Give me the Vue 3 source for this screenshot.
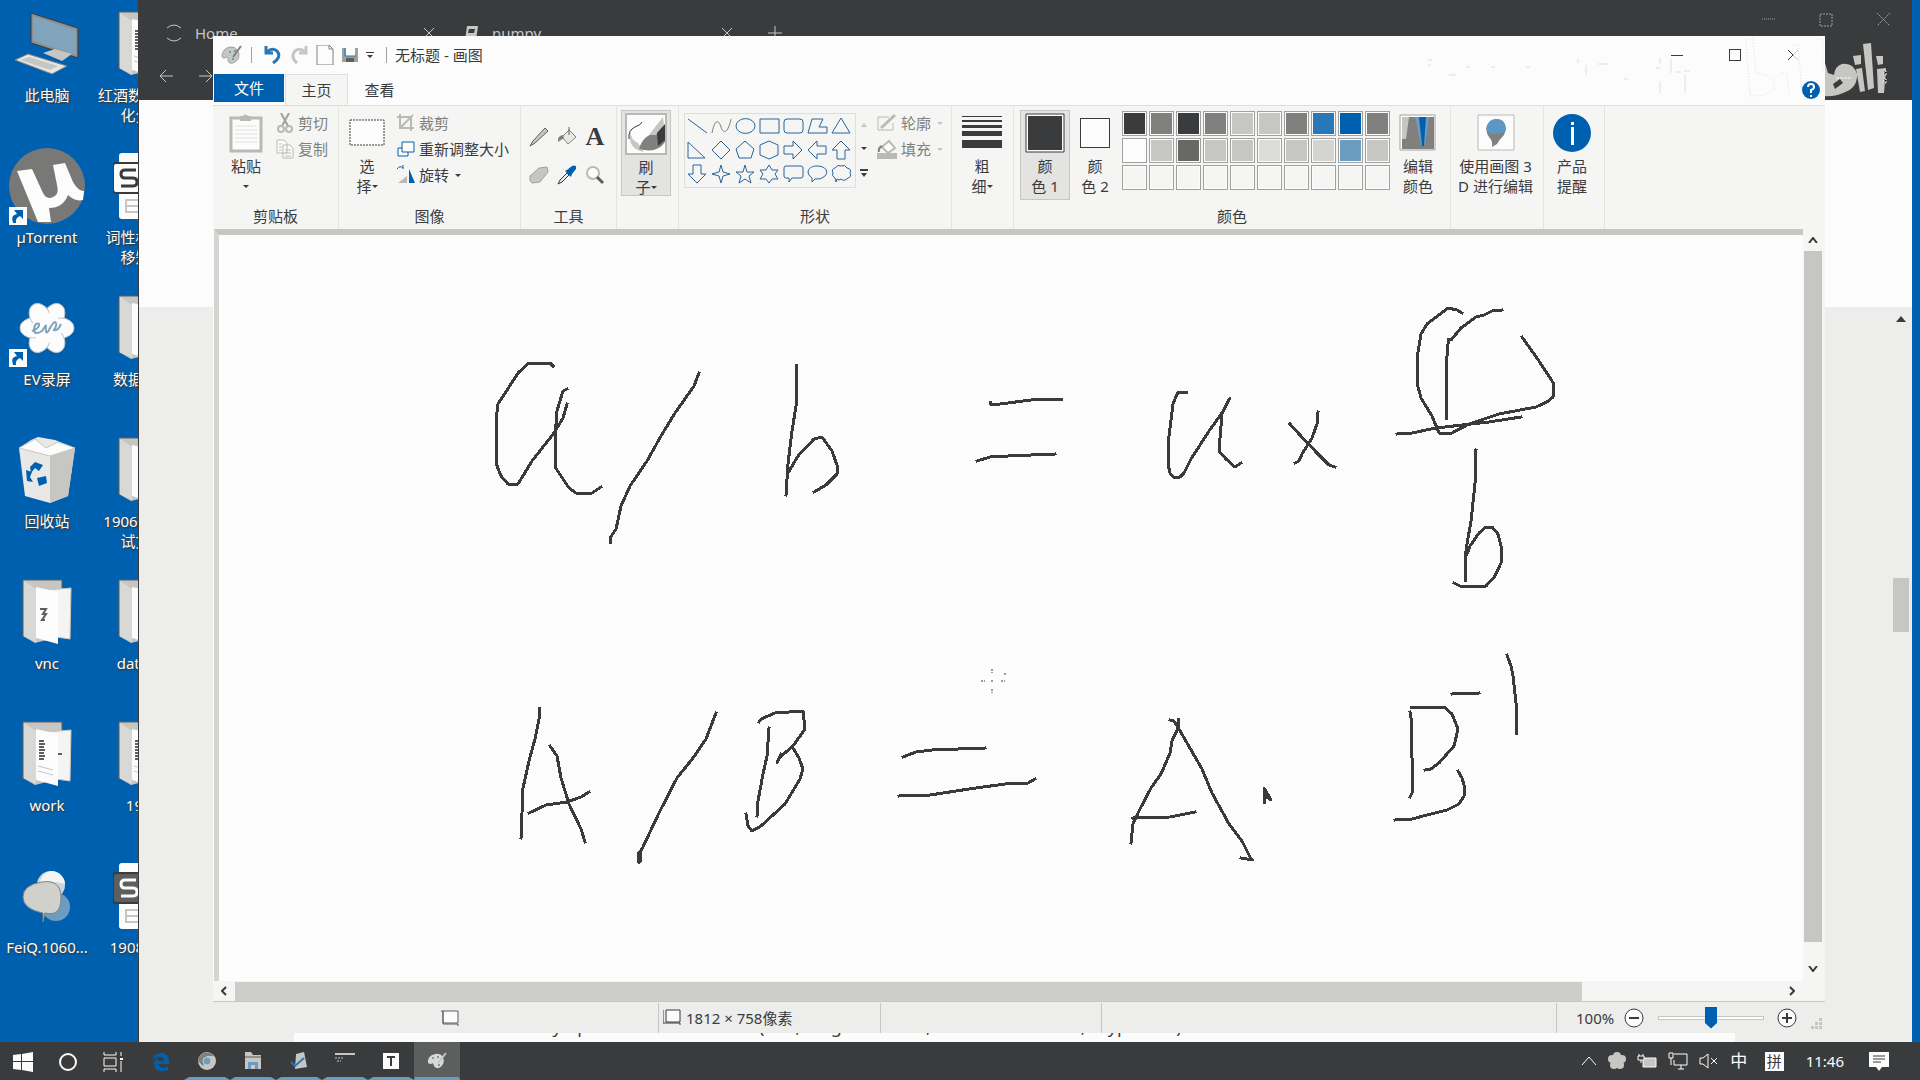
<script setup>
import { ref } from 'vue'

const zoom = ref(50)

const deskLeft = [
  { icon: 'pc', name: '此电脑' },
  { icon: 'utorrent', name: 'µTorrent', shortcut: true },
  { icon: 'ev', name: 'EV录屏', shortcut: true },
  { icon: 'bin', name: '回收站' },
  { icon: 'folder', name: 'vnc' },
  { icon: 'folder', name: 'work', lines: true },
  { icon: 'feiq', name: 'FeiQ.1060...' },
]
const deskRight = [
  { icon: 'folder', name: '红酒数据可视', second: '化分析', lines: true },
  { icon: 'sheet', name: '词性标注转', second: '移矩阵' },
  { icon: 'folder', name: '数据分析' },
  { icon: 'folder', name: '1906面试题', second: '试文件' },
  { icon: 'folder', name: 'dataset' },
  { icon: 'folder', name: '1908', lines: true },
  { icon: 'sheet', name: '190808表', dark: true },
]

const shapes = [
  { d: 'M1 3 20 17' },
  { d: 'M1 17C4 2 8 4 10 11S17 18 20 3', grey: true },
  { d: 'M1 10a9 7 0 1 0 19 0a9 7 0 1 0-19 0z' },
  { d: 'M1 3H20V17H1z' },
  { d: 'M4 3H17Q20 3 20 6V14Q20 17 17 17H4Q1 17 1 14V6Q1 3 4 3z' },
  { d: 'M5 3H16L12 11H20V17H1z' },
  { d: 'M10 2 19 17H1z' },
  { d: 'M1 2V18H18z' },
  { d: 'M10 1 19 10 10 19 1 10z' },
  { d: 'M10 1 19 9 16 18H4L1 9z' },
  { d: 'M10 1 19 5V15L10 19 1 15V5z' },
  { d: 'M1 6H10V1L19 10 10 19V14H1z' },
  { d: 'M19 6H10V1L1 10 10 19V14H19z' },
  { d: 'M6 19V10H1L10 1 19 10H14V19z' },
  { d: 'M6 1V10H1L10 19 19 10H14V1z' },
  { d: 'M10 1 12 8 19 10 12 12 10 19 8 12 1 10 8 8z' },
  { d: 'M10 1 12 8H19L14 12 16 19 10 15 4 19 6 12 1 8H8z' },
  { d: 'M10 1 13 6H19L16 10 19 15H13L10 19 7 15H1L4 10 1 6H7z' },
  { d: 'M3 2H18Q20 2 20 4V12Q20 14 18 14H9L6 18V14H3Q1 14 1 12V4Q1 2 3 2z' },
  { d: 'M5 14C-2 9 1 2 10 2S22 8 18 12Q14 16 8 15L5 18z' },
  { d: 'M4 14Q0 12 2 9Q0 5 4 4Q7 0 10 2Q14 0 16 4Q21 5 19 9Q21 13 17 14Q13 18 10 15Q8 17 6 15L5 18z' },
]

const palette = [
  '#3a3b3d', '#80817f', '#3a3b3d', '#80817f', '#c6c7c3', '#c6c7c3', '#80817f', '#2878b8', '#0060b0', '#80817f',
  '#fcfcfc', '#c6c7c3', '#686866', '#c6c7c3', '#c6c7c3', '#dcdcda', '#c6c7c3', '#d4d4d0', '#6c9cc0', '#c6c7c3',
  '', '', '', '', '', '', '', '', '', '',
]

const strokes = [
  '554,365 551,362 530,362 519,372 510,386 499,403 497,420 497,462 502,475 509,483 519,483 533,460 555,432 564,417 568,403',
  '568,388 564,390 558,410 556,437 556,466 570,487 577,492 593,492 602,486',
  '700,372 695,385 676,412 662,435 648,460 631,485 622,505 617,528 611,537 611,541',
  '797,364 797,405 793,430 789,463 787,494',
  '789,472 799,455 815,438 823,436 833,450 839,467 838,473 827,484 815,491',
  '991,401 991,403 1001,403 1040,398 1062,398',
  '978,460 991,456 1009,455 1056,453',
  '1187,391 1179,391 1174,403 1171,427 1169,443 1169,463 1171,472 1174,476 1181,476 1185,472 1192,458 1210,430 1223,412 1231,397 1223,413 1220,450 1227,458 1236,466 1242,462',
  '1291,423 1300,433 1318,452 1330,464 1336,466',
  '1319,411 1318,423 1313,437 1303,453 1300,460 1296,462',
  '1463,312 1458,309 1449,307 1440,314 1428,323 1422,333 1418,357 1418,382 1422,397 1433,415 1440,432 1453,432 1470,423 1500,413 1537,406 1548,401 1554,396 1555,383 1540,360 1523,336',
  '1503,309 1493,310 1485,314 1477,316 1462,327 1452,339 1449,338 1449,343 1447,368 1447,417',
  '1398,433 1413,432 1437,427 1490,421 1522,416',
  '1477,449 1476,483 1472,520 1468,543 1466,557 1466,579',
  '1468,553 1471,545 1480,532 1487,526 1493,526 1499,533 1502,545 1502,562 1496,575 1487,585 1461,585 1455,582',
  '540,707 540,718 536,738 530,760 524,787 522,837',
  '551,745 558,755 562,777 570,803 582,828 586,841',
  '530,812 547,804 568,801 582,796 590,791',
  '717,712 707,738 694,757 678,777 660,812 643,848 639,853 639,861 641,861 641,851',
  '760,721 762,718 776,712 804,710 806,728 794,745 780,757 778,762 782,753',
  '770,727 768,755 764,773 759,800 758,815',
  '794,747 800,757 804,768 801,778 786,803 762,825 753,830 749,825 747,813',
  '904,756 917,751 933,749 986,747',
  '900,795 931,794 970,788 1006,783 1029,782 1036,778',
  '1179,718 1179,727 1173,740 1171,752 1162,773 1152,787 1140,810 1134,823 1132,842',
  '1171,719 1175,720 1180,728 1203,768 1213,792 1230,823 1243,840 1252,858 1254,859 1242,857',
  '1134,817 1171,816 1196,811',
  '1265,801 1265,787 1272,799 1268,796',
  '1412,706 1445,706 1453,713 1459,728 1455,745 1440,762 1432,768 1426,769',
  '1411,711 1412,717 1412,753 1413,757 1413,792 1411,796',
  '1459,770 1463,777 1466,787 1465,795 1460,803 1448,809 1428,814 1413,818 1396,819',
  '1453,693 1480,692',
  '1508,654 1512,665 1514,675 1517,702 1517,732',
]
</script>

<template>
  <div class="desktop">
    <main class="workspace">
      <div class="icons">
        <div v-for="(col, c) in [deskLeft, deskRight]" :key="c" class="icon-col">
          <button v-for="item in col" :key="item.name" class="desk-item" type="button">
            <span class="desk-pic">
              <svg v-if="item.icon === 'pc'" width="66" height="64" viewBox="0 0 66 64">
                <path d="M17 1 64 16V46L17 31z" fill="#8d8e8c" stroke="#3a3b3d" />
                <path d="M19 4 62 18V43L19 29z" fill="#80a4bc" />
                <path d="M29 41 41 37 58 42 48 49z" fill="#c6c7c3" />
                <path d="M1 48 14 42 53 54 38 62z" fill="#e6e6e4" stroke="#80817f" />
                <path d="M6 48 15 45 44 54 36 58z" fill="#c6c7c3" />
              </svg>
              <svg v-else-if="item.icon === 'utorrent'" width="76" height="76" viewBox="0 0 76 76">
                <circle cx="38" cy="38" r="38" fill="#787977" />
                <path d="M8 23 23 21 34 45Q38 53 46 48Q50 45 48 37L44 17 56 15 64 34Q69 43 75 43L74 52Q66 54 59 47Q54 60 40 60L42 74 29 74z" fill="#fcfcfc" />
              </svg>
              <svg v-else-if="item.icon === 'ev'" width="58" height="52" viewBox="0 0 58 52">
                <g fill="#fcfcfc" stroke="#c6c7c3">
                  <ellipse v-for="n in 6" :key="n" cx="29" cy="12" rx="10" ry="13" :transform="`rotate(${n * 60 - 30} 29 26)`" />
                </g>
                <circle cx="29" cy="26" r="15" fill="#fcfcfc" />
                <path d="M14 29q8-3 7-7q-4-2-5 5q0 7 8 2l4-6q-1 12 3 5q4-8 6-8q3 2-1 8q4 1 7-6" fill="none" stroke="#80a4bc" stroke-width="2" />
              </svg>
              <svg v-else-if="item.icon === 'bin'" width="60" height="68" viewBox="0 0 60 68">
                <path d="M2 12 14 4 21 1 38 4 58 12 51 60 33 67 8 60z" fill="#e8e8e6" />
                <path d="M33 20 58 12 51 60 33 67z" fill="#c6c7c3" />
                <path d="M2 12 33 20 58 12 41 6 29 12 18 3z" fill="#fcfcfc" stroke="#c6c7c3" />
                <path d="M13 31l5-5 8 3-4 6-4-3-4 5zM9 34l6 2-2 5 3 5-6-1zM20 42l9-2 1 7-8 3z" fill="#0060b0" />
              </svg>
              <svg v-else-if="item.icon === 'folder'" width="50" height="66" viewBox="0 0 50 66">
                <path d="M1 1H40V57L13 64 1 57z" fill="#c6c7c3" />
                <path d="M1 1 14 10V63L1 57z" fill="#d8d8d5" />
                <path d="M26 11 49 9 48 60 34 58z" fill="#f4f4f2" stroke="#c6c7c3" />
                <path d="M14 8 36 13V65L14 59z" fill="#fcfcfc" />
                <path d="M1 58V1H40V9" fill="none" stroke="#5d5e5e" />
                <path v-if="item.lines" d="M17 20h5M17 23h6M17 26h5M17 29h6M17 32h5M17 35h6M17 38h5M36 33h4" fill="none" stroke="#5d5e5e" stroke-width="2" />
                <path v-if="item.lines" d="M16 45l15 4M16 50l15 4" fill="none" stroke="#c6c7c3" />
                <path v-else-if="c === 0" d="M18 30h6l-3 5h3l-4 6h3" fill="none" stroke="#5d5e5e" stroke-width="2" />
              </svg>
              <svg v-else-if="item.icon === 'sheet'" width="60" height="66" viewBox="0 0 60 66">
                <rect x="6" width="54" height="66" rx="3" fill="#fcfcfc" />
                <rect y="10" width="40" height="30" rx="3" :fill="item.dark ? '#5d5e5e' : '#fcfcfc'" stroke="#3a3b3d" stroke-width="2" />
                <path d="M23 17H12Q8 17 8 21T12 25H20Q24 25 24 29T20 33H8" fill="none" :stroke="item.dark ? '#fcfcfc' : '#3a3b3d'" stroke-width="3" />
                <path d="M13 47H50V59H13zM13 53H50M26 47V59" fill="none" stroke="#c6c7c3" stroke-width="2" />
              </svg>
              <svg v-else width="50" height="52" viewBox="0 0 50 52">
                <circle cx="29" cy="15" r="14" fill="#c9d6de" />
                <circle cx="34" cy="37" r="14" fill="#6c9cc0" />
                <path d="M29 1a14 14 0 0 1 14 13Q30 10 18 13Q20 2 29 1z" fill="#f4f4f2" />
                <path d="M21 52V43Q1 39 1 27T20 12T39 28T23 43z" fill="#d0d0cc" stroke="#80817f" />
              </svg>
              <svg v-if="item.shortcut" class="shortcut" width="18" height="18" viewBox="0 0 18 18">
                <path d="M0 0H18V18H0z" fill="#fcfcfc" />
                <path d="M4 16Q1 8 8 7L5 3H14V12L11 9Q6 11 7 16z" fill="#0060b0" />
              </svg>
            </span>
            <span class="desk-name">{{ item.name }}<br v-if="item.second" />{{ item.second }}</span>
          </button>
        </div>
      </div>

      <section class="browser">
        <header class="browser-bar">
          <div class="tab-strip">
            <div class="tab tab-home">
              <svg width="18" height="18" viewBox="0 0 18 18"><path d="M2 4Q9-2 16 4M2 14Q9 20 16 14" fill="none" stroke="#c6c7c3" /></svg>
              <span>Home</span>
              <button type="button" aria-label="关闭标签">
                <svg width="10" height="10" viewBox="0 0 10 10"><path d="M0 0 10 10M10 0 0 10" stroke="#c6c7c3" /></svg>
              </button>
            </div>
            <div class="tab tab-book">
              <svg width="16" height="16" viewBox="0 0 16 16"><path d="M3 1H14L12 15H1z" fill="#c6c7c3" /><path d="M5 4H11L10 8H4z" fill="#3a3b3d" /></svg>
              <span>numpy</span>
              <button type="button" aria-label="关闭标签">
                <svg width="10" height="10" viewBox="0 0 10 10"><path d="M0 0 10 10M10 0 0 10" stroke="#c6c7c3" /></svg>
              </button>
            </div>
            <button class="new-tab" type="button" aria-label="新标签">
              <svg width="14" height="14" viewBox="0 0 14 14"><path d="M7 0V14M0 7H14" stroke="#c6c7c3" /></svg>
            </button>
            <div class="browser-controls">
              <svg width="13" height="13" viewBox="0 0 13 13"><path d="M0 6H13" stroke="#a0a19f" stroke-dasharray="1 1" /></svg>
              <svg width="14" height="14" viewBox="0 0 14 14"><path d="M1 1H13V13H1z" fill="none" stroke="#a0a19f" stroke-dasharray="2 1" /></svg>
              <svg width="13" height="13" viewBox="0 0 13 13"><path d="M0 0 13 13M13 0 0 13" stroke="#a0a19f" stroke-dasharray="2 1" /></svg>
            </div>
          </div>
          <nav class="nav-row">
            <svg width="14" height="14" viewBox="0 0 14 14"><path d="M14 7H1M7 1 1 7 7 13" fill="none" stroke="#c6c7c3" /></svg>
            <svg width="14" height="14" viewBox="0 0 14 14"><path d="M0 7H13M7 1 13 7 7 13" fill="none" stroke="#c6c7c3" /></svg>
          </nav>
        </header>
        <div class="page-head"></div>
        <div class="page-body">
          <p class="code-line">Many operators can be seen (row, length divided, then the first row, dtype else)</p>
          <div class="page-scroll">
            <svg width="10" height="6" viewBox="0 0 10 6"><path d="M5 0 10 6H0z" fill="#3a3b3d" /></svg>
            <div class="page-thumb"></div>
          </div>
        </div>
      </section>

      <section class="paint">
        <header class="titlebar">
          <svg width="22" height="20" viewBox="0 0 22 20">
            <path d="M9 2Q1 4 1 11Q2 15 5 12Q8 12 7 16Q9 20 14 17Q20 13 17 6Q14 1 9 2z" fill="#c6c7c3" stroke="#a0a19f" />
            <path d="M12 12 20 1" stroke="#80817f" stroke-width="2" />
            <path d="M8 7h2M13 6h2M11 14h2" stroke="#6c9cc0" stroke-width="2" />
          </svg>
          <i class="bar"></i>
          <button type="button" aria-label="撤消"><svg width="18" height="20" viewBox="0 0 18 20"><path d="M2 1V8H9M3 7Q8 2 13 6Q18 12 9 18" fill="none" stroke="#2878b8" stroke-width="3" /></svg></button>
          <button type="button" aria-label="重做"><svg width="18" height="20" viewBox="0 0 18 20"><path d="M16 1V8H9M15 7Q10 2 5 6Q0 12 7 18" fill="none" stroke="#c6c7c3" stroke-width="3" /></svg></button>
          <button type="button" aria-label="新建"><svg width="18" height="20" viewBox="0 0 18 20"><path d="M1 0H13L17 4V20H1z" fill="#fcfcfc" stroke="#80817f" /><path d="M13 0V4H17" fill="none" stroke="#80817f" /></svg></button>
          <button type="button" aria-label="保存"><svg width="16" height="16" viewBox="0 0 16 16"><path d="M0 1H16V15H0z" fill="#a0a19f" /><path d="M4 1H13V9H4z" fill="#fcfcfc" /><path d="M4 11H12V15H4z" fill="#5d5e5e" /><path d="M3 1V9H14" fill="none" stroke="#2878b8" /></svg></button>
          <button type="button" aria-label="自定义"><svg width="8" height="6" viewBox="0 0 8 6"><path d="M0 0H8V1H0zM1 3H7L4 6z" fill="#3a3b3d" /></svg></button>
          <i class="bar last"></i>
          <h1>无标题 - 画图</h1>
          <div class="win-controls">
            <button type="button" aria-label="最小化"><svg width="12" height="12" viewBox="0 0 12 12"><path d="M0 6H12V7H0z" fill="#3a3b3d" /></svg></button>
            <button type="button" aria-label="最大化"><svg width="12" height="12" viewBox="0 0 12 12"><path d="M0 0H12V12H0zM1 1V11H11V1z" fill="#3a3b3d" fill-rule="evenodd" /></svg></button>
            <button type="button" aria-label="关闭"><svg width="12" height="12" viewBox="0 0 12 12"><path d="M1 1 6 6 1 11" fill="none" stroke="#3a3b3d" /><path d="M11 1 6 6 11 11" fill="none" stroke="#c6c7c3" /></svg></button>
          </div>
        </header>

        <nav class="tabs">
          <button class="file" type="button">文件</button>
          <button class="active" type="button">主页</button>
          <button type="button">查看</button>
          <button class="help" type="button" aria-label="帮助">
            <svg width="18" height="18" viewBox="0 0 18 18"><circle cx="9" cy="9" r="9" fill="#0060b0" /><path d="M6 6Q6 3 9 3T12 6Q12 8 9 9V12M9 14V16" fill="none" stroke="#fcfcfc" stroke-width="2" /></svg>
          </button>
        </nav>

        <div class="ribbon">
          <section class="group g-clip">
            <div class="body">
              <button class="big" type="button">
                <svg width="34" height="40" viewBox="0 0 34 40">
                  <path d="M2 5H32V38H2z" fill="#fcfcfc" stroke="#b9bab6" stroke-width="3" />
                  <path d="M11 3H14Q16 0 19 3H22V8H11z" fill="#b9bab6" />
                  <path d="M6 13H28M6 17H28M6 21H28M6 25H28M6 29H28" stroke="#dededb" />
                </svg>
                <span>粘贴</span><span><i class="caret"></i></span>
              </button>
              <div class="stack">
                <button class="row off" type="button"><svg width="18" height="20" viewBox="0 0 18 20"><path d="M5 0 12 13M13 0 6 13" stroke="#a0a19f" stroke-width="2" /><circle cx="5" cy="16" r="3" fill="none" stroke="#b9bab6" stroke-width="2" /><circle cx="13" cy="16" r="3" fill="none" stroke="#b9bab6" stroke-width="2" /></svg>剪切</button>
                <button class="row off" type="button"><svg width="18" height="20" viewBox="0 0 18 20"><path d="M1 1H8L11 4V14H1zM7 6H14L17 9V19H7z" fill="#fcfcfc" stroke="#b9bab6" /><path d="M3 5H6M3 8H6M3 11H6M9 11H15M9 14H15M9 17H15" stroke="#b9bab6" /></svg>复制</button>
              </div>
            </div>
            <h2>剪贴板</h2>
          </section>

          <section class="group g-image">
            <div class="body">
              <button class="big" type="button">
                <svg width="36" height="40" viewBox="0 0 36 40"><path d="M1 7H35V32H1z" fill="#fcfcfc" stroke="#3a3b3d" stroke-dasharray="2 1" /></svg>
                <span>选</span><span>择<i class="caret"></i></span>
              </button>
              <div class="stack">
                <button class="row off" type="button"><svg width="18" height="20" viewBox="0 0 18 20"><path d="M0 4H14V18M3 1V15H17M3 15 16 2" fill="none" stroke="#b9bab6" stroke-width="2" /></svg>裁剪</button>
                <button class="row" type="button"><svg width="18" height="20" viewBox="0 0 18 20"><path d="M1 9H11V17H1z" fill="#fcfcfc" stroke="#0060b0" /><path d="M5 3H17V13H5z" fill="#fcfcfc" stroke="#0060b0" /></svg>重新调整大小</button>
                <button class="row" type="button"><svg width="18" height="20" viewBox="0 0 18 20"><path d="M12 4V18H18z" fill="#0060b0" /><path d="M10 11V18H1z" fill="#b9bab6" /><path d="M0 4Q3 0 6 3M6 0V4" fill="none" stroke="#0060b0" /></svg>旋转<i class="caret"></i></button>
              </div>
            </div>
            <h2>图像</h2>
          </section>

          <section class="group g-tools">
            <div class="body tools">
              <button type="button" aria-label="铅笔"><svg width="20" height="20" viewBox="0 0 20 20"><path d="M1 19 4 14 16 1 19 4 6 16z" fill="#c6c7c3" stroke="#5d5e5e" /></svg></button>
              <button type="button" aria-label="填充"><svg width="20" height="20" viewBox="0 0 20 20"><path d="M5 10 12 3 19 10 11 17z" fill="#e8e8e6" stroke="#80817f" /><path d="M12 0V8" stroke="#5d5e5e" /><path d="M6 8Q0 9 1 15L7 11z" fill="#80817f" /></svg></button>
              <button class="letter" type="button">A</button>
              <button type="button" aria-label="橡皮擦"><svg width="20" height="20" viewBox="0 0 20 20"><path d="M1 11 10 3 18 2 19 7 11 17 3 18 1 16z" fill="#c6c7c3" stroke="#a0a19f" /></svg></button>
              <button type="button" aria-label="取色"><svg width="20" height="20" viewBox="0 0 20 20"><path d="M1 19 3 15 10 8 12 10 5 17z" fill="#e8e8e6" stroke="#3a3b3d" /><path d="M8 6 10 5 15 1Q20-1 19 4L15 9 14 12z" fill="#0060b0" /></svg></button>
              <button type="button" aria-label="放大镜"><svg width="20" height="20" viewBox="0 0 20 20"><circle cx="8" cy="8" r="6" fill="#fcfcfc" stroke="#b9bab6" stroke-width="2" /><path d="M12 12 18 18" stroke="#5d5e5e" stroke-width="3" /></svg></button>
            </div>
            <h2>工具</h2>
          </section>

          <section class="group g-brush">
            <div class="body">
              <button class="big on" type="button">
                <svg width="42" height="42" viewBox="0 0 42 42">
                  <path d="M1 1H41V41H1z" fill="#fcfcfc" stroke="#b9bab6" stroke-width="2" />
                  <path d="M5 18Q2 36 19 39L13 30Q6 27 5 18" fill="#c6c7c3" />
                  <path d="M17 9Q16 12 10 14Q3 17 4 26" fill="none" stroke="#3a3b3d" />
                  <path d="M14 36Q18 22 31 20L40 12V29Q32 41 14 36z" fill="#80817f" />
                  <path d="M24 22 38 4 39 12 31 22z" fill="#c6c7c3" />
                  <path d="M32 20 40 11V27L33 33z" fill="#3a3b3d" />
                </svg>
                <span>刷</span><span>子<i class="caret"></i></span>
              </button>
            </div>
          </section>

          <section class="group g-shapes">
            <div class="body">
              <div class="gallery">
                <button v-for="(s, i) in shapes" :key="i" type="button" aria-label="形状">
                  <svg width="21" height="20" viewBox="0 0 21 20"><path :d="s.d" fill="none" :stroke="s.grey ? '#80817f' : '#2a639a'" /></svg>
                </button>
              </div>
              <div class="gallery-scroll">
                <svg width="8" height="8" viewBox="0 0 8 8"><path d="M4 2 7 6H1z" fill="#c6c7c3" /></svg>
                <svg width="8" height="8" viewBox="0 0 8 8"><path d="M1 2H7L4 5z" fill="#3a3b3d" /></svg>
                <svg width="8" height="8" viewBox="0 0 8 8"><path d="M0 0H8V2H0zM1 4H7L4 8z" fill="#3a3b3d" /></svg>
              </div>
              <div class="stack">
                <button class="row off" type="button"><svg width="20" height="20" viewBox="0 0 20 20"><path d="M12 4H1V17H16V10" fill="none" stroke="#b9bab6" /><path d="M4 15 18 2" stroke="#b9bab6" stroke-width="3" /></svg>轮廓<i class="caret"></i></button>
                <button class="row off" type="button"><svg width="20" height="20" viewBox="0 0 20 20"><path d="M0 14H20V20H0z" fill="#b9bab6" /><path d="M5 8 12 2 18 9 11 14z" fill="#fcfcfc" stroke="#b9bab6" stroke-width="2" /><path d="M5 7Q1 9 2 13" fill="none" stroke="#80817f" stroke-width="2" /></svg>填充<i class="caret"></i></button>
              </div>
            </div>
            <h2>形状</h2>
          </section>

          <section class="group g-size">
            <div class="body">
              <button class="big" type="button">
                <svg width="40" height="40" viewBox="0 0 40 40"><path d="M0 3H40V4H0zM0 7H40V9H0zM0 12H40V15H0zM0 18H40V23H0zM0 27H40V35H0z" fill="#3a3b3d" /></svg>
                <span>粗</span><span>细<i class="caret"></i></span>
              </button>
            </div>
          </section>

          <section class="group g-colors">
            <div class="body">
              <button class="big on tall" type="button">
                <svg width="40" height="40" viewBox="0 0 40 40"><path d="M1 1H39V39H1z" fill="#fcfcfc" stroke="#3a3b3d" /><path d="M3 3H37V37H3z" fill="#3a3b3d" /></svg>
                <span>颜</span><span>色 1</span>
              </button>
              <button class="big second" type="button">
                <svg width="30" height="40" viewBox="0 0 30 40"><path d="M0 5H30V35H0z" fill="#3a3b3d" /><path d="M1 6H29V34H1z" fill="#fcfcfc" /></svg>
                <span>颜</span><span>色 2</span>
              </button>
              <div class="palette">
                <button v-for="(p, i) in palette" :key="i" type="button" aria-label="颜色" :style="{ backgroundColor: p || '#f5f5f4' }"></button>
              </div>
              <button class="big edit" type="button">
                <svg width="38" height="40" viewBox="0 0 38 40">
                  <path d="M1 2H36V37H1z" fill="#fcfcfc" stroke="#a0a19f" />
                  <path d="M3 4H35V36H3z" fill="#80817f" /><path d="M3 4H10L7 26H3z" fill="#c6c7c3" />
                  <path d="M16 4H30L26 32H22z" fill="#6c9cc0" /><path d="M20 4H27L25 33H23z" fill="#0060b0" />
                </svg>
                <span>编辑</span><span>颜色</span>
              </button>
            </div>
            <h2>颜色</h2>
          </section>

          <section class="group g-3d">
            <div class="body">
              <button class="big" type="button">
                <svg width="38" height="40" viewBox="0 0 38 40">
                  <path d="M1 2H37V37H1z" fill="#fcfcfc" stroke="#b9bab6" />
                  <path d="M15 34Q16 28 12 24Q7 17 12 10Q19 3 26 8Q31 14 27 22Q22 27 20 31z" fill="#80817f" />
                  <path d="M9 16Q11 5 20 6Q29 8 29 17Q25 22 20 20Q14 24 9 16z" fill="#5c98c6" />
                </svg>
                <span>使用画图 3</span><span>D 进行编辑</span>
              </button>
            </div>
          </section>

          <section class="group g-alert">
            <div class="body">
              <button class="big" type="button">
                <svg width="38" height="40" viewBox="0 0 38 40"><circle cx="19" cy="20" r="19" fill="#0060b0" /><path d="M18 9H21V12H18zM18 14H21V32H18z" fill="#fcfcfc" /></svg>
                <span>产品</span><span>提醒</span>
              </button>
            </div>
          </section>
        </div>

        <div class="stage">
          <div class="stage-view">
            <svg class="drawing" width="1584" height="746" viewBox="220 234 1584 746">
              <polyline v-for="(s, i) in strokes" :key="i" :points="s" />
              <path class="cursor" d="M993 668V672M993 688V692M982 680H986M1002 680H1006M992 680H994M1006 672V675" />
            </svg>
          </div>
          <div class="vscroll">
            <svg width="10" height="6" viewBox="0 0 10 6"><path d="M1 6 5 1 9 6" fill="none" stroke="#3a3b3d" stroke-width="2" /></svg>
            <div class="vthumb"></div>
            <svg width="10" height="6" viewBox="0 0 10 6"><path d="M1 0 5 5 9 0" fill="none" stroke="#3a3b3d" stroke-width="2" /></svg>
          </div>
        </div>
        <div class="hscroll">
          <svg width="6" height="10" viewBox="0 0 6 10"><path d="M5 1 1 5 5 9" fill="none" stroke="#3a3b3d" stroke-width="2" /></svg>
          <div class="htrack"><div class="hthumb"></div></div>
          <svg width="6" height="10" viewBox="0 0 6 10"><path d="M1 1 5 5 1 9" fill="none" stroke="#3a3b3d" stroke-width="2" /></svg>
        </div>

        <footer class="status">
          <div class="cell c1">
            <svg width="18" height="18" viewBox="0 0 18 18"><path d="M2 2H17V14H2z" fill="#fcfcfc" stroke="#5d5e5e" /><path d="M0 2H2V15H17V17" fill="none" stroke="#5d5e5e" /></svg>
          </div>
          <div class="cell c2">
            <svg width="18" height="18" viewBox="0 0 18 18"><path d="M3 1H17V13H3z" fill="#fcfcfc" stroke="#3a3b3d" /><path d="M0 1V14H17V16" fill="none" stroke="#3a3b3d" /></svg>
            <span>1812 × 758像素</span>
          </div>
          <div class="cell c3"></div>
          <div class="cell c4"></div>
          <div class="zoom">
            <label for="zoom">100%</label>
            <button type="button" aria-label="缩小"><svg width="20" height="20" viewBox="0 0 20 20"><circle cx="10" cy="10" r="9" fill="#fcfcfc" stroke="#3a3b3d" /><path d="M5 10H15" stroke="#3a3b3d" stroke-width="2" /></svg></button>
            <input id="zoom" v-model="zoom" type="range" min="0" max="100" />
            <button type="button" aria-label="放大"><svg width="20" height="20" viewBox="0 0 20 20"><circle cx="10" cy="10" r="9" fill="#fcfcfc" stroke="#3a3b3d" /><path d="M5 10H15M10 5V15" stroke="#3a3b3d" stroke-width="2" /></svg></button>
            <svg class="grip" width="12" height="12" viewBox="0 0 12 12"><path d="M8 0h3v3H8zM4 4h3v3H4zM8 4h3v3H8zM0 8h3v3H0zM4 8h3v3H4zM8 8h3v3H8z" fill="#c6c7c3" /></svg>
          </div>
        </footer>
      </section>

      <svg class="watermark" width="470" height="64" viewBox="0 0 470 64">
        <g fill="none" stroke="#dededb">
          <path d="M0 23H4M0 28H3M21 38H28M38 30H42M63 30H67M98 30H102M150 22V26M158 28V38M170 27H180M196 42H200M232 21V27M243 22V36M232 44V56M257 38V56M228 31H232M248 35H253M256 34H262" />
          <path d="M318 3 325 1 328 36Q345 38 346 48T326 59H322zM352 37 358 35 361 57M365 8 370 7 374 56M389 3 395 1 395 36" stroke-dasharray="1 2" />
        </g>
        <g fill="#c6c7c3">
          <path d="M397 26 400 36 406 38Q407 29 414 27Q425 25 429 37Q430 51 415 56Q405 60 397 59z" />
          <path d="M425 19 433 18 433 27 427 28zM428 32 434 31 437 54 432 55zM435 7 443 6 446 51 440 53zM448 19 455 19 455 27 450 28zM449 32 458 31 456 56 450 56z" />
        </g>
        <path d="M405 47 412 42 415 46 407 52z" fill="#3a3b3d" />
        <path d="M408 41h15M456 34h2v4h-2zM456 42h2v4h-2z" stroke="#fcfcfc" stroke-dasharray="3 1" />
      </svg>
    </main>

    <footer class="taskbar">
      <button type="button" aria-label="开始"><svg width="20" height="20" viewBox="0 0 20 20"><path d="M0 3 8 2V9H0zM9 2 20 0V9H9zM0 10H8V18L0 17zM9 10H20V20L9 18z" fill="#fcfcfc" /></svg></button>
      <button type="button" aria-label="搜索"><svg width="20" height="20" viewBox="0 0 20 20"><circle cx="10" cy="10" r="8" fill="none" stroke="#fcfcfc" stroke-width="2" /></svg></button>
      <button type="button" aria-label="任务视图"><svg width="20" height="20" viewBox="0 0 20 20"><path d="M1 0V3H13V0M1 6H13V14H1zM1 20V17H13V20M18 0V4M18 9V20" fill="none" stroke="#fcfcfc" /><path d="M17 6H20V8H17z" fill="#fcfcfc" /></svg></button>
      <button class="edge" type="button" aria-label="Edge"><svg width="18" height="18" viewBox="0 0 18 18"><path d="M0 8Q2 0 9 0Q18 0 17 11H6Q7 15 12 15Q14 15 16 13V17Q2 21 2 10Q3 6 7 4Q5 6 6 8H12Q12 4 9 4Q4 3 0 8z" fill="#0060b0" /></svg></button>
      <button class="open" type="button" aria-label="Chrome"><svg width="18" height="18" viewBox="0 0 18 18"><circle cx="9" cy="9" r="9" fill="#c6c7c3" /><path d="M0 9A9 9 0 0 1 16 4H9L5 14z" fill="#80817f" /><circle cx="9" cy="9" r="4" fill="#6c9cc0" stroke="#c6c7c3" /></svg></button>
      <button class="open" type="button" aria-label="资源管理器"><svg width="18" height="18" viewBox="0 0 18 18"><path d="M1 0H7L9 3H17V17H1z" fill="#c6c7c3" /><path d="M1 5H17" stroke="#5d5e5e" /><path d="M4 17V10H14V17H11V13H7V17z" fill="#6c9cc0" /></svg></button>
      <button class="open" type="button" aria-label="笔记"><svg width="18" height="18" viewBox="0 0 18 18"><path d="M6 2 14 0 17 15 5 17z" fill="#c6c7c3" /><path d="M1 10 5 14 14 6" fill="none" stroke="#2878b8" stroke-width="2" /></svg></button>
      <button class="open" type="button" aria-label="终端"><svg width="20" height="18" viewBox="0 0 20 18"><path d="M0 1H20V3H0z" fill="#c6c7c3" /><path d="M0 6H9M2 9H6" stroke="#c6c7c3" stroke-dasharray="2 1" /></svg></button>
      <button class="open" type="button" aria-label="Typora"><svg width="18" height="18" viewBox="0 0 18 18"><path d="M1 1H17V17H1z" fill="#fcfcfc" /><path d="M5 5H13M9 5V14" stroke="#3a3b3d" stroke-width="2" /></svg></button>
      <button class="open current" type="button" aria-label="画图"><svg width="20" height="18" viewBox="0 0 20 18"><path d="M8 2Q0 4 1 11Q4 13 6 11Q7 17 12 16Q19 12 16 5Q13 1 8 2z" fill="#d8d8d5" /><path d="M11 11 19 1" stroke="#c6c7c3" stroke-width="2" /><path d="M5 6h2M10 5h2M11 13h2" stroke="#6c9cc0" stroke-width="2" /></svg></button>
      <div class="tray">
        <svg width="16" height="10" viewBox="0 0 16 10"><path d="M1 9 8 1 15 9" fill="none" stroke="#fcfcfc" /></svg>
        <svg width="18" height="18" viewBox="0 0 18 18"><g fill="#c6c7c3"><circle cx="9" cy="4" r="4" /><circle cx="4" cy="7" r="4" /><circle cx="14" cy="7" r="4" /><circle cx="6" cy="13" r="4" /><circle cx="12" cy="13" r="4" /><circle cx="9" cy="9" r="5" /></g></svg>
        <svg width="20" height="14" viewBox="0 0 20 14"><path d="M6 4H19V13H6z" fill="#c6c7c3" stroke="#fcfcfc" /><path d="M1 2H7V6H1zM2 0V2M6 0V2M4 6V9" fill="#3a3b3d" stroke="#fcfcfc" /></svg>
        <svg width="20" height="18" viewBox="0 0 20 18"><path d="M6 2H19V13H6V8M10 17H16M13 13V17M1 1H5V6H1zM3 6V13" fill="none" stroke="#fcfcfc" /></svg>
        <svg width="20" height="16" viewBox="0 0 20 16"><path d="M1 5H4L9 1V15L4 11H1zM12 5 18 11M18 5 12 11" fill="none" stroke="#fcfcfc" /></svg>
        <span class="ime">中</span>
        <span class="pin">拼</span>
        <time>11:46</time>
        <svg width="20" height="20" viewBox="0 0 20 20"><path d="M0 1H20V16H13L10 20 7 16H0z" fill="#fcfcfc" /><path d="M4 5H16M4 8H16M4 11H12" stroke="#3a3b3d" /></svg>
      </div>
    </footer>
  </div>
</template>

<style>
body {
  background: #0060b0;
}
</style>

<style scoped>
* {
  box-sizing: border-box;
}
.desktop {
  display: flex;
  flex-direction: column;
  min-height: 100vh;
  background: #0060b0;
  color: #3a3b3d;
  font: 15px/20px "Noto Sans", "Noto Sans CJK SC", sans-serif;
}
button {
  margin: 0;
  padding: 0;
  border: 0;
  background: none;
  color: inherit;
  font: inherit;
}
svg {
  display: block;
  flex: none;
}
h1,
h2,
p {
  margin: 0;
  font: inherit;
}
.workspace {
  position: relative;
  flex: 1;
  display: flex;
  padding-right: 8px;
  overflow: hidden;
}

/* desktop icons */
.icons {
  display: flex;
  width: 139px;
  overflow: hidden;
  border-right: 1px solid #3a3b3d;
}
.icon-col {
  flex: none;
  width: 96px;
}
.desk-item {
  display: flex;
  flex-direction: column;
  align-items: center;
  gap: 2px;
  width: 94px;
  height: 142px;
  padding-top: 5px;
}
.desk-pic {
  position: relative;
  display: flex;
  align-items: center;
  justify-content: center;
  width: 76px;
  height: 78px;
}
.shortcut {
  position: absolute;
  left: 0;
  bottom: 0;
}
.desk-name {
  color: #fcfcfc;
  white-space: nowrap;
  text-shadow: 1px 1px 1px #3a3b3d, 0 1px 2px #3a3b3d;
}

/* browser behind */
.browser {
  flex: 1;
  display: flex;
  flex-direction: column;
}
.browser-bar {
  height: 100px;
  background: #3a3b3d;
  color: #c6c7c3;
}
.tab-strip {
  display: flex;
  align-items: center;
  height: 66px;
  padding-left: 26px;
}
.tab {
  display: flex;
  align-items: center;
  gap: 12px;
}
.tab button {
  margin-left: auto;
}
.tab-home {
  width: 269px;
}
.tab-book {
  width: 268px;
  margin-left: 30px;
}
.new-tab {
  margin-left: 36px;
}
.browser-controls {
  display: flex;
  gap: 44px;
  margin: 0 22px 26px auto;
}
.nav-row {
  display: flex;
  gap: 26px;
  padding: 3px 0 0 20px;
}
.page-head {
  height: 207px;
  background: #fcfcfc;
}
.page-body {
  flex: 1;
  display: flex;
  align-items: flex-end;
  background: #ededec;
}
.code-line {
  flex: 1;
  margin: 0 157px 0 155px;
  padding-left: 221px;
  height: 28px;
  overflow: hidden;
  background: #fcfcfc;
  font-size: 18px;
  line-height: 24px;
  white-space: nowrap;
}
.page-scroll {
  align-self: stretch;
  width: 20px;
  padding-top: 9px;
}
.page-scroll svg {
  margin-left: 4px;
}
.page-thumb {
  width: 16px;
  height: 54px;
  margin-top: 256px;
  margin-left: 1px;
  background: #c6c7c3;
}

/* paint window */
.paint {
  position: absolute;
  inset: 36px 95px 9px 213px;
  display: flex;
  flex-direction: column;
  background: #fcfcfc;
}
.titlebar {
  display: flex;
  align-items: center;
  gap: 8px;
  height: 38px;
  padding-left: 8px;
}
.titlebar .bar {
  width: 1px;
  height: 16px;
  background: #a0a19f;
}
.titlebar .bar + button {
  margin-left: 4px;
}
.titlebar .last {
  margin-left: 4px;
}
.win-controls {
  display: flex;
  gap: 46px;
  margin: 0 26px 0 auto;
}
.tabs {
  display: flex;
  height: 31px;
}
.tabs button {
  width: 63px;
  height: 31px;
}
.tabs .file {
  width: 70px;
  height: 28px;
  margin: 0 1px;
  background: #0060b0;
  color: #fcfcfc;
}
.tabs .active {
  border: 1px solid #dededb;
  border-bottom: 0;
  background: #f5f5f4;
}
.tabs .help {
  width: 18px;
  margin: 0 5px 0 auto;
}
.ribbon {
  display: flex;
  height: 124px;
  border-top: 1px solid #dededb;
  background: #f5f5f4;
}
.group {
  display: flex;
  flex-direction: column;
  justify-content: space-between;
  flex: none;
  border-right: 1px solid #e4e4e2;
}
.group h2 {
  height: 23px;
  text-align: center;
}
.g-clip { width: 126px; }
.g-image { width: 182px; }
.g-tools { width: 96px; }
.g-brush { width: 62px; }
.g-shapes { width: 273px; }
.g-size { width: 62px; }
.g-colors { width: 437px; }
.g-3d { width: 93px; }
.g-alert { width: 61px; }
.body {
  display: flex;
  padding-top: 4px;
}
.big {
  display: flex;
  flex-direction: column;
  align-items: center;
  min-width: 50px;
  height: 86px;
  padding-top: 3px;
}
.big svg {
  margin-bottom: 3px;
}
.big span {
  display: flex;
  align-items: center;
  min-height: 20px;
  white-space: pre;
}
.on {
  border: 1px solid #c6c7c3;
  padding-top: 2px;
  background: #e3e3e1;
}
.on svg {
  margin-bottom: 2px;
}
.tall {
  height: 90px;
}
.tall svg {
  margin-bottom: 3px;
}
.caret {
  width: 0;
  height: 0;
  border: 3px solid transparent;
  border-top-color: #3a3b3d;
  border-bottom: 0;
}
.big .caret {
  margin-left: 5px;
}
.row .caret {
  margin-left: 2px;
}
.big span > .caret:only-child {
  margin-left: 0;
}
.stack {
  display: flex;
  flex-direction: column;
}
.row {
  display: flex;
  align-items: center;
  gap: 4px;
  height: 26px;
  white-space: nowrap;
}
.off {
  color: #80817f;
}
.off .caret {
  border-top-color: #c6c7c3;
}
.g-clip .big {
  margin-left: 8px;
}
.g-clip .big span > .caret {
  margin-bottom: 0;
}
.g-clip .stack {
  margin-left: 5px;
}
.g-image .big {
  margin-left: 3px;
}
.g-image .stack {
  margin-left: 5px;
}
.tools {
  display: grid;
  grid-template-columns: 20px 20px 20px;
  gap: 18px 8px;
  padding: 21px 0 0 8px;
}
.letter {
  height: 20px;
  font: bold 26px/20px "Liberation Serif", serif;
}
.g-brush .big {
  margin-left: 4px;
}
.gallery {
  display: grid;
  grid-template-columns: repeat(7, 24px);
  grid-auto-rows: 24px;
  height: 75px;
  margin: 3px 0 0 5px;
  padding-left: 2px;
  border: 1px solid #dededb;
}
.gallery button {
  display: flex;
  align-items: center;
}
.gallery-scroll {
  display: flex;
  flex-direction: column;
  align-items: center;
  gap: 16px;
  width: 16px;
  padding-top: 11px;
}
.g-shapes .stack {
  margin-left: 5px;
}
.g-size .big {
  margin-left: 5px;
}
.g-colors .tall {
  margin-left: 6px;
}
.second {
  width: 50px;
}
.palette {
  display: grid;
  grid-template-columns: repeat(10, 25px);
  grid-auto-rows: 25px;
  gap: 2px;
  margin-left: 2px;
  padding-top: 1px;
}
.palette button {
  border: 1px solid #a0a19f;
  box-shadow: inset 0 0 0 1px #fcfcfc;
}
.edit {
  margin-left: 3px;
}
.g-3d .big {
  width: 89px;
}
.g-alert .big {
  width: 56px;
}
.stage {
  flex: 1;
  display: flex;
  min-height: 0;
  margin-left: 1px;
}
.stage-view {
  flex: 1;
  min-width: 0;
  overflow: hidden;
  border-top: 6px solid #c6c7c3;
  border-left: 5px solid #d4d4d1;
}
.drawing polyline {
  fill: none;
  stroke: #3a3b3d;
  stroke-width: 3;
  stroke-linecap: square;
  stroke-linejoin: round;
  shape-rendering: crispEdges;
}
.cursor {
  stroke: #3a3b3d;
  stroke-dasharray: 2 1;
}
.vscroll {
  display: flex;
  flex-direction: column;
  align-items: center;
  width: 22px;
  padding: 8px 3px 9px 1px;
  background: #f5f5f4;
}
.vthumb {
  flex: 1;
  align-self: stretch;
  margin: 8px 0 24px;
  background: #c6c7c3;
}
.hscroll {
  display: flex;
  align-items: center;
  height: 20px;
  padding: 0 30px 0 8px;
  background: #f5f5f4;
}
.htrack {
  flex: 1;
  margin: 0 6px 0 8px;
}
.hthumb {
  width: 87%;
  height: 19px;
  background: #cdcdc9;
}
.status {
  display: flex;
  align-items: center;
  height: 32px;
  border-top: 1px solid #c6c7c3;
  background: #ededec;
}
.cell {
  display: flex;
  align-items: center;
  gap: 5px;
  height: 30px;
  border-right: 1px solid #c6c7c3;
}
.c1 { width: 446px; padding-left: 228px; }
.c2 { width: 222px; padding-left: 4px; }
.c3 { width: 221px; }
.c4 { flex: 1; }
.zoom {
  display: flex;
  align-items: center;
  width: 268px;
  padding-left: 19px;
}
.zoom label {
  width: 48px;
}
.zoom input {
  width: 106px;
  height: 24px;
  margin: 0 13px 0 14px;
  appearance: none;
  background: none;
}
.zoom input::-webkit-slider-runnable-track {
  height: 4px;
  border: 1px solid #c6c7c3;
  background: #fcfcfc;
}
.zoom input::-webkit-slider-thumb {
  appearance: none;
  width: 12px;
  height: 22px;
  margin-top: -10px;
  background: #0060b0;
  clip-path: polygon(0 0, 100% 0, 100% 75%, 50% 100%, 0 75%);
}
.grip {
  align-self: flex-end;
  margin-left: auto;
  margin-right: 2px;
}
.watermark {
  position: absolute;
  top: 37px;
  right: 22px;
  pointer-events: none;
}

/* taskbar */
.taskbar {
  display: flex;
  align-items: center;
  height: 38px;
  background: #3a3b3d;
  color: #fcfcfc;
}
.taskbar button {
  display: flex;
  align-items: center;
  justify-content: center;
  width: 46px;
  height: 38px;
  padding-top: 1px;
}
.taskbar button:nth-child(-n + 3) {
  width: 45px;
}
.taskbar .edge {
  margin-left: 3px;
}
.taskbar .open {
  padding-top: 3px;
  border: solid #6c9cc0;
  border-width: 0 0 3px;
  border-left: 5px solid #3a3b3d;
  border-right: 5px solid #3a3b3d;
}
.taskbar .current {
  border-left-width: 1px;
  border-right-width: 1px;
  border-left-color: #5d5e5e;
  border-right-color: #5d5e5e;
  background: #5d5e5e;
}
.tray {
  display: flex;
  align-items: center;
  gap: 11px;
  margin-left: auto;
  padding-right: 31px;
}
.ime {
  width: 18px;
  font-size: 17px;
  text-align: center;
}
.pin {
  width: 19px;
  height: 19px;
  margin: 0 11px 0 6px;
  background: #fcfcfc;
  color: #3a3b3d;
  line-height: 19px;
  text-align: center;
}
.tray time {
  margin-right: 14px;
}
</style>
